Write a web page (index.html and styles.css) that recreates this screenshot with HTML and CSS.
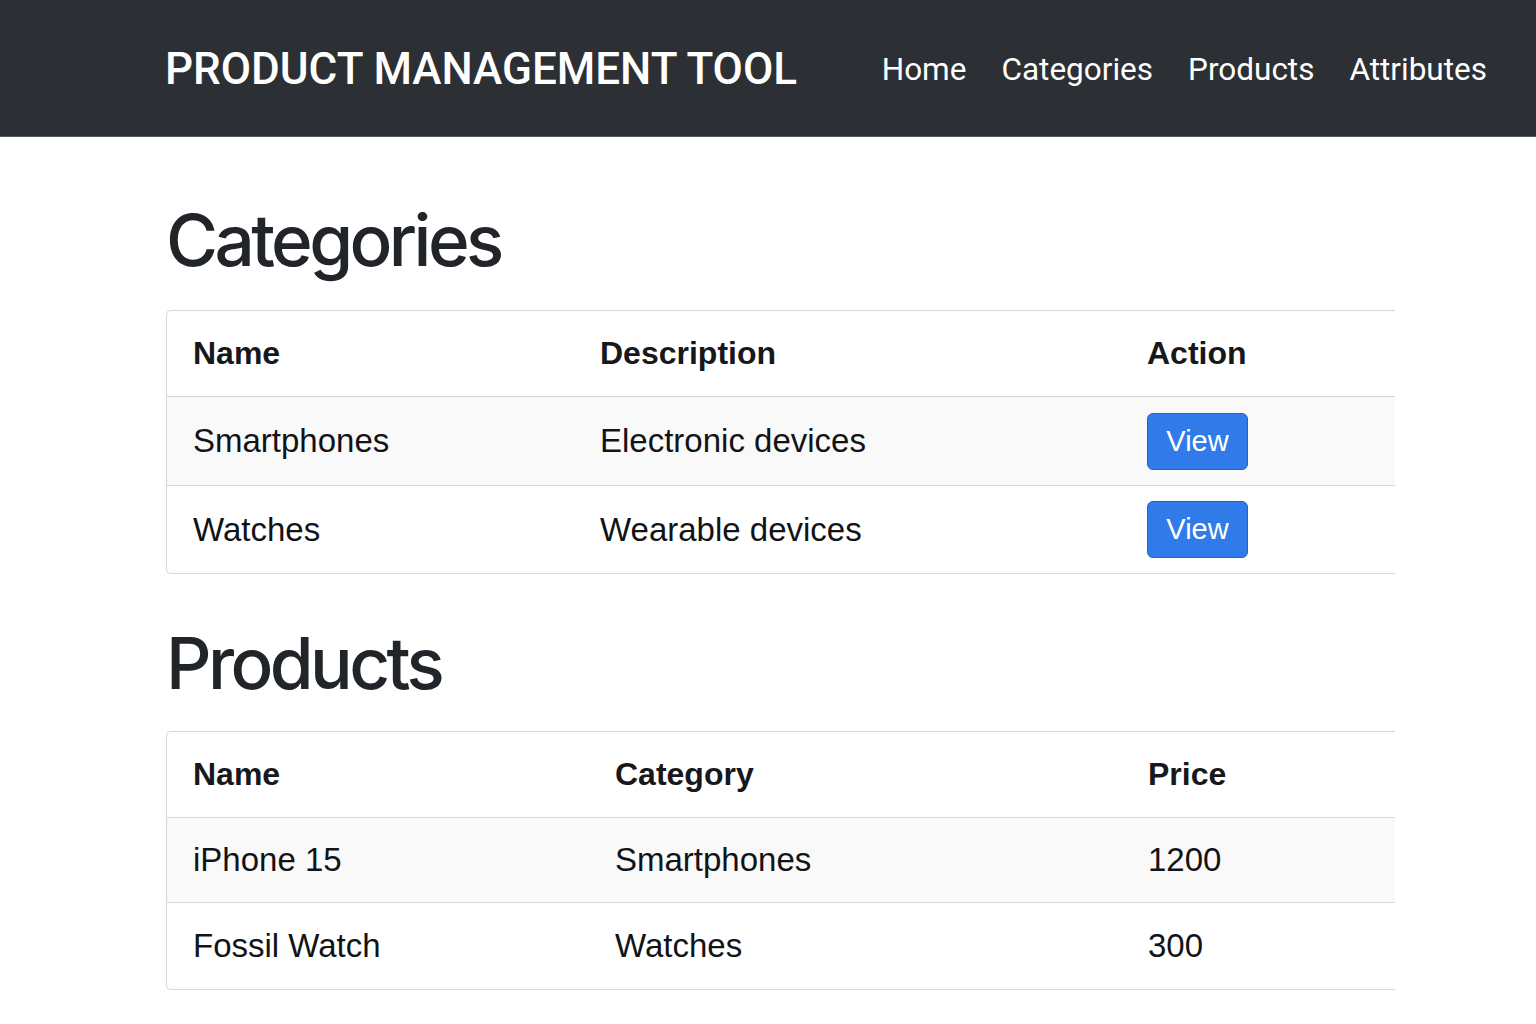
FILE: index.html
```html
<!DOCTYPE html>
<html lang="en">
<head>
<meta charset="utf-8">
<title>Product Management Tool</title>
<link rel="stylesheet" href="styles.css">
</head>
<body>
<header class="navbar">
  <div class="brand">PRODUCT MANAGEMENT TOOL</div>
  <nav class="nav">
    <a href="#">Home</a>
    <a href="#">Categories</a>
    <a href="#">Products</a>
    <a href="#">Attributes</a>
  </nav>
</header>
<main class="container">
  <h2 class="title first">Categories</h2>
  <div class="table-box">
    <table class="data cat">
      <colgroup><col class="c1"><col class="c2"><col class="c3"></colgroup>
      <thead><tr><th>Name</th><th>Description</th><th>Action</th></tr></thead>
      <tbody>
        <tr class="striped"><td>Smartphones</td><td>Electronic devices</td><td><button class="btn">View</button></td></tr>
        <tr class="last"><td>Watches</td><td>Wearable devices</td><td><button class="btn">View</button></td></tr>
      </tbody>
    </table>
  </div>
  <h2 class="title second">Products</h2>
  <div class="table-box">
    <table class="data prod">
      <colgroup><col class="p1"><col class="p2"><col class="p3"></colgroup>
      <thead><tr><th>Name</th><th>Category</th><th>Price</th></tr></thead>
      <tbody>
        <tr class="striped"><td>iPhone 15</td><td>Smartphones</td><td>1200</td></tr>
        <tr class="last"><td>Fossil Watch</td><td>Watches</td><td>300</td></tr>
      </tbody>
    </table>
  </div>
</main>
</body>
</html>
```
FILE: styles.css
```css
html, body {
  margin: 0;
  padding: 0;
  background: #ffffff;
}
body {
  font-family: "Liberation Sans", Arial, sans-serif;
  color: #111315;
}
.navbar {
  height: 136px;
  background: #2c2f33;
  border-bottom: 1px solid #55585c;
  display: flex;
  align-items: center;
  justify-content: space-between;
  padding: 0 49px 0 165px;
}
.brand {
  font-family: Roboto, "Liberation Sans", sans-serif;
  font-weight: 500;
  font-size: 44px;
  color: #ffffff;
  margin-top: 2px;
}
.nav {
  display: flex;
  gap: 35px;
  margin-top: 2px;
}
.nav a {
  font-family: Roboto, "Liberation Sans", sans-serif;
  font-size: 31.5px;
  color: #ffffff;
  text-decoration: none;
}
.container {
  margin-left: 166px;
  width: 1229px;
}
.title {
  font-family: Inter, "Liberation Sans", sans-serif;
  font-weight: 500;
  font-size: 71px;
  line-height: 72px;
  color: #212529;
  letter-spacing: -3.6px;
  margin: 0;
}
.title.first {
  margin-top: 67px;
  margin-bottom: 34px;
}
.title.second {
  margin-top: 53px;
  margin-bottom: 32px;
}
.table-box {
  border: 1px solid #d3d6da;
  border-right: none;
  border-radius: 5px 0 0 5px;
  overflow: hidden;
}
.data {
  width: 100%;
  border-collapse: collapse;
  table-layout: fixed;
}
.c1 { width: 407px; }
.c2 { width: 547px; }
.c3 { width: auto; }
.p1 { width: 422px; }
.p2 { width: 533px; }
.p3 { width: auto; }
.data th {
  text-align: left;
  font-weight: 700;
  font-size: 32px;
  height: 85px;
  padding: 0 0 0 26px;
  color: #16181b;
  vertical-align: middle;
}
.data td {
  font-size: 33px;
  padding: 0 0 0 26px;
  vertical-align: middle;
  border-top: 1px solid #d3d6da;
  color: #111315;
}
.cat td { height: 88px; }
.cat .last td { height: 87px; }
.prod td { height: 84px; }
.prod .last td { height: 86px; }
.striped td {
  background: #f9f9fa;
}
.btn {
  font-family: "Liberation Sans", Arial, sans-serif;
  font-size: 29px;
  color: #ffffff;
  background: #307be9;
  border: 1px solid #1c63d6;
  border-radius: 6px;
  width: 101px;
  height: 57px;
  padding: 0;
  margin: 0;
  cursor: pointer;
}
```
